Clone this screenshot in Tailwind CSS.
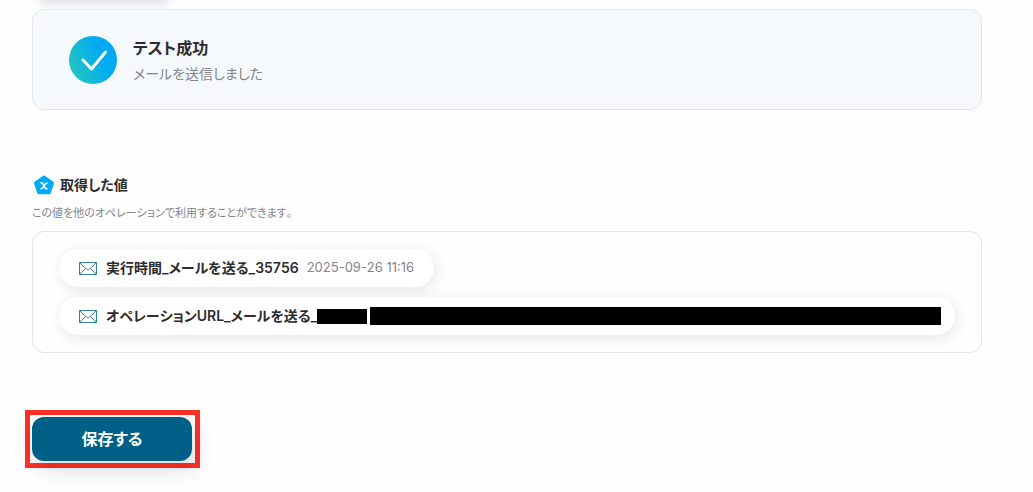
<!DOCTYPE html>
<html lang="ja">
<head>
<meta charset="utf-8">
<meta name="viewport" content="width=device-width, initial-scale=1">
<title>テスト成功</title>
<script src="https://cdn.jsdelivr.net/npm/@tailwindcss/browser@4"></script>
</head>
<body class="bg-[#fefeff] font-['Inter','Noto_Sans_CJK_JP',sans-serif] text-[#2c2c30] [font-feature-settings:'palt'] [font-kerning:none]">
<main class="overflow-hidden pr-[51px] pb-6 pl-8">
  <!-- Shadow of the button that has scrolled out of view -->
  <div class="flex h-[9px] w-32 items-start pl-4"><div class="-mt-[5px] h-px w-full shadow-[0_0_10px_8px_rgba(40,35,70,0.14)]"></div></div>

  <section class="relative flex h-[101px] items-center gap-4 rounded-xl border border-[#e4e5ea] bg-[#f5f9fc] px-9">
    <svg class="size-12 shrink-0" viewBox="0 0 48 48" fill="none" aria-hidden="true">
      <defs><linearGradient id="ok" x1="4" y1="38" x2="36" y2="22" gradientUnits="userSpaceOnUse"><stop stop-color="#22c5c0"/><stop offset="1" stop-color="#00aaf5"/></linearGradient></defs>
      <circle cx="24" cy="24" r="24" fill="url(#ok)"/>
      <path d="M14 24l8.500 9L36.500 16" stroke="#fff" stroke-width="3" stroke-linecap="round" stroke-linejoin="round"/>
    </svg>
    <div>
      <h2 class="text-base leading-7 font-semibold">テスト成功</h2>
      <p class="text-sm leading-6 text-[#858588]">メールを送信しました</p>
    </div>
  </section>

  <section class="mt-[63px]">
    <div class="flex h-6 items-center gap-1">
      <svg class="size-6" viewBox="0 0 24 24" fill="none" aria-hidden="true">
        <path d="M12 4l8.500 6-3.200 9.700H6.700L3.500 10z" fill="#00aaf5" stroke="#00aaf5" stroke-width="3" stroke-linejoin="round"/>
        <path d="M8.500 10c1.500-.5 2.500 0 3.200 2s1.600 4.500 3.800 3.500M15.500 10c-2 0-3 2-3.800 3.200S9.500 16 8.500 15.700" stroke="#fff" stroke-width="1.600"/>
      </svg>
      <h2 class="text-sm leading-6 font-semibold">取得した値</h2>
    </div>
    <p class="mt-2 text-[11px] leading-4 text-[#858588]">この値を他のオペレーションで利用することができます。</p>
    <ul class="mt-[10px] flex flex-col items-start gap-[10px] rounded-xl border border-[#e4e4e8] px-[26px] py-[17px]">
      <li class="flex h-[38px] items-center rounded-full bg-white px-5 shadow-[2px_3px_14px_rgba(40,35,60,0.11)]">
        <svg class="mr-[9px] h-[14px] w-[18px] shrink-0" viewBox="0 0 18 14" fill="none" stroke="#34809b" aria-hidden="true"><path d="M.5 1.500h17v12H.5zM.5 1.500L7.500 8q1.500 1 3 0l7-6.500M.5 13.500l6-6M17.500 13.500l-6-6"/></svg>
        <span class="text-sm font-semibold">実行時間_メールを送る_35756</span>
        <time class="ml-2 text-[13px] text-[#858588]">2025-09-26 11:16</time>
      </li>
      <li class="flex h-[38px] w-full items-center rounded-full bg-white pr-[14px] pl-5 shadow-[2px_3px_14px_rgba(40,35,60,0.11)]">
        <svg class="mr-[9px] h-[14px] w-[18px] shrink-0" viewBox="0 0 18 14" fill="none" stroke="#34809b" aria-hidden="true"><path d="M.5 1.500h17v12H.5zM.5 1.500L7.500 8q1.500 1 3 0l7-6.500M.5 13.500l6-6M17.500 13.500l-6-6"/></svg>
        <span class="shrink-0 text-sm font-semibold">オペレーションURL_メールを送る_</span>
        <span class="h-[15px] w-[50px] shrink-0 bg-black"></span>
        <span class="ml-[3px] h-[18px] flex-1 bg-black"></span>
      </li>
    </ul>
  </section>

  <div class="mt-[57px] -ml-[7px] w-fit border-5 border-[#fe3023] py-[2px] pr-[3px] pl-[2px]">
    <button type="button" class="block h-11 w-40 rounded-xl bg-[#005f86] text-base font-bold text-white shadow-[4px_8px_20px_rgba(40,35,60,0.16)] [font-feature-settings:'palt']">保存する</button>
  </div>
</main>
</body>
</html>
